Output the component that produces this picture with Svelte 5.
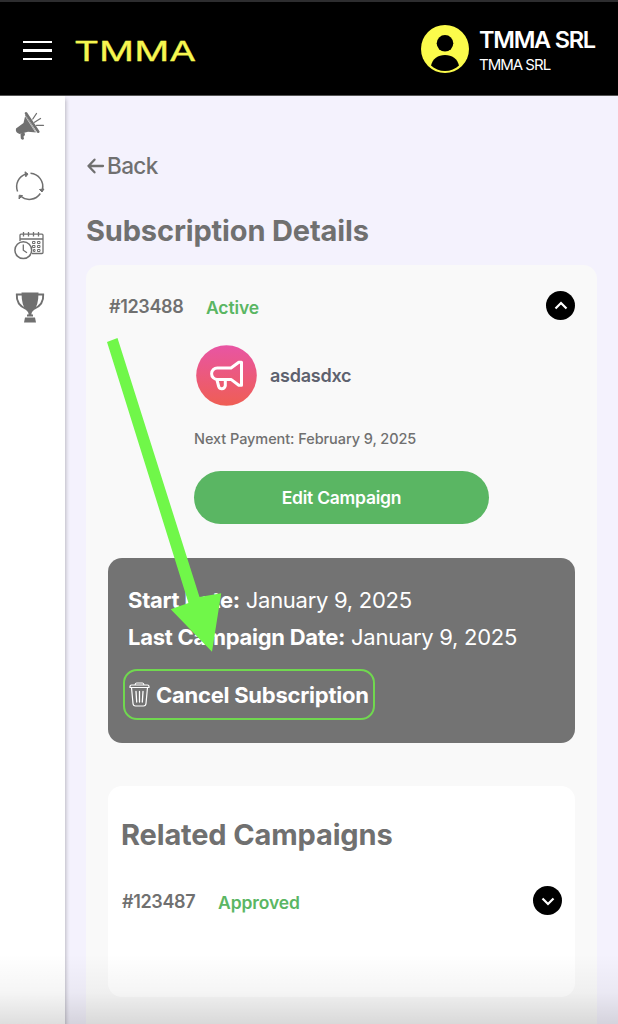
<script>
  let open = true;
  let relatedOpen = false;

  const company = 'TMMA SRL';
  const subscription = {
    id: '123488',
    status: 'Active',
    name: 'asdasdxc',
    nextPayment: 'February 9, 2025',
    startDate: 'January 9, 2025',
    lastDate: 'January 9, 2025'
  };
  const related = [{ id: '123487', status: 'Approved' }];
</script>

<div class="app">
  <header class="topbar">
    <button class="menu-btn" aria-label="Menu">
      <span></span>
      <span></span>
      <span></span>
    </button>
    <svg class="logo" width="122" height="34" viewBox="0 0 122 34">
      <text x="-1" y="26.500" textLength="122" lengthAdjust="spacingAndGlyphs">TMMA</text>
    </svg>
    <div class="account">
      <svg width="48" height="48" viewBox="0 0 48 48">
        <circle cx="24" cy="24" r="24" fill="#fbfb4b" />
        <circle cx="24" cy="18.3" r="8.3" fill="#000" />
        <path d="M10 40.5C11.500 34 17 30 24 30S36.500 34 38 40.500C34.500 44 29.500 46 24 46S13.500 44 10 40.500Z" fill="#000" />
      </svg>
      <div class="account-text">
        <strong>{company}</strong>
        <span>{company}</span>
      </div>
    </div>
  </header>

  <div class="body">
    <nav class="sidebar">
      <a href="#campaigns" aria-label="Campaigns">
        <svg width="32" height="30" viewBox="0 0 32 30">
          <path d="M2 17.500L9.500 12 11.500 3.500 22.500 21.500 14 20.700 5.500 23Q1 21.500 2 17.500Z" fill="#707070" />
          <path d="M6.500 22.500L10.500 21.500 11 24 9.500 25.500 10 28Q8 29.500 6.800 27.500Z" fill="#707070" />
          <path d="M12 2.300L24.300 20.700" stroke="#707070" stroke-width="2.600" stroke-linecap="round" />
          <path d="M11.200 5L22 21.800" stroke="#fff" stroke-width=".6" />
          <path d="M18.800 8L22.500 2.500M20.500 11.200L26.500 7.500M22.500 14.300H29.500" stroke="#707070" stroke-width="1.300" stroke-linecap="round" />
        </svg>
      </a>
      <a href="#subscriptions" aria-label="Subscriptions">
        <svg width="32" height="30" viewBox="0 0 32 30" fill="none" stroke="#707070" stroke-width="1.500">
          <path d="M3.600 20.500A13.200 13.200 0 0 1 12 3M16.500 2.300A13.200 13.200 0 0 1 28.400 18.500M26.300 22.500A13.200 13.200 0 0 1 6.500 25" />
          <path d="M11 .8L14 3 11.800 5.800ZM25.500 18.500L28 21 30 18ZM5 28L5.200 24.200 8.500 24.600Z" fill="#707070" stroke-width="1" />
        </svg>
      </a>
      <a href="#calendar" aria-label="Calendar">
        <svg width="32" height="30" viewBox="0 0 32 30" fill="none" stroke="#707070" stroke-width="1.300">
          <path d="M6 10V4.200Q6 3.200 7 3.200H28Q29 3.200 29 4.200V21.500Q29 22.500 28 22.500H18M6 8H29" />
          <path d="M9.500 1V5.500M14.500 1V5.500M19.500 1V5.500M24.500 1V5.500" />
          <path d="M18.500 10.500h2.500v2h-2.500zM23.500 10.500h2.500v2h-2.500zM18.500 14.500h2.500v2h-2.500zM23.500 14.500h2.500v2h-2.500zM19.500 18.500h1.500v2h-1.500zM23.500 18.500h2.500v2h-2.500z" stroke-width="1" />
          <circle cx="9.300" cy="19.200" r="8.400" fill="#fff" stroke-width="1.500" />
          <path d="M9.300 13.500V19.200L13 21.800" />
        </svg>
      </a>
      <a href="#awards" aria-label="Awards">
        <svg width="32" height="34" viewBox="0 0 32 34">
          <path d="M7.500 1.500H24.500Q24.500 15 19.500 19.500 17.500 21 17.500 22.500V24.500H14.500V22.500Q14.500 21 12.500 19.500 7.500 15 7.500 1.500Z" fill="#707070" />
          <path d="M8 3.500H2.800Q2 13.500 12 18M24 3.500H29.200Q30 13.500 20 18" fill="none" stroke="#707070" stroke-width="1.900" />
          <path d="M13 23.500H19V25.500H13ZM11 26.500H21L22 31.500H10Z" fill="#707070" />
        </svg>
      </a>
    </nav>

    <main class="content">
      <button class="back">
        <svg width="19" height="18" viewBox="0 0 19 18" fill="none" stroke="#707070" stroke-width="2.300" stroke-linecap="round" stroke-linejoin="round">
          <path d="M17 9H2.500M8.500 2.700L2.500 9 8.500 15.300" />
        </svg>
        <span>Back</span>
      </button>
      <h1>Subscription Details</h1>

      <section class="panel">
        <div class="row">
          <span class="number">#{subscription.id}</span>
          <span class="status">{subscription.status}</span>
          <button class="toggle" aria-label="Toggle details" on:click={() => (open = !open)}>
            <svg class:down={!open} width="14" height="14" viewBox="0 0 14 14">
              <path d="M1.500 9.500L7 4 12.500 9.500" />
            </svg>
          </button>
        </div>

        {#if open}
          <div class="campaign">
            <div class="campaign-name">
              <svg width="61" height="61" viewBox="0 0 61 61" fill="none">
                <defs>
                  <linearGradient id="badge" x1="0" y1="0" x2="0" y2="1">
                    <stop offset="0" stop-color="#e855a4" />
                    <stop offset="1" stop-color="#ef5e54" />
                  </linearGradient>
                </defs>
                <circle cx="30.500" cy="30.500" r="30.300" fill="url(#badge)" />
                <g stroke="#fff" stroke-width="3" stroke-linejoin="round" stroke-linecap="round">
                  <path d="M35 23H21.300A5.700 5.700 0 0 0 21.300 34.400H35L42.800 40.300H45.500V17.200H42.800Z" />
                  <path d="M21 35L22.700 41.500Q23.600 44 26 43.800T29.300 40.800V35" />
                </g>
              </svg>
              <strong>{subscription.name}</strong>
            </div>
            <p class="payment">Next Payment: {subscription.nextPayment}</p>
            <button class="edit-btn">Edit Campaign</button>
          </div>

          <div class="dates">
            <p><strong>Start Date:</strong> {subscription.startDate}</p>
            <p><strong>Last Campaign Date:</strong> {subscription.lastDate}</p>
            <button class="cancel-btn">
              <svg width="21" height="25" viewBox="0 0 21 25" fill="none" stroke="#fff" stroke-width="1.200" stroke-linejoin="round" stroke-linecap="round">
                <path d="M1 4.500Q1 3 2.500 3H18.500Q20 3 20 4.500V5.500H1ZM6 3Q6.200 1 7.500 1H13.500Q14.800 1 15 3M2.500 5.500L4 21.500Q4.200 24 6.500 24H14.500Q16.800 24 17 21.500L18.500 5.500" />
                <path d="M7 9.500L7.700 20M10.500 9.500V20M14 9.500L13.300 20" stroke-width="1.300" />
              </svg>
              <span>Cancel Subscription</span>
            </button>
          </div>
        {/if}

        <div class="related">
          <h2>Related Campaigns</h2>
          {#each related as item}
            <div class="row">
              <span class="number">#{item.id}</span>
              <span class="status">{item.status}</span>
              <button class="toggle" aria-label="Toggle campaign" on:click={() => (relatedOpen = !relatedOpen)}>
                <svg class:down={!relatedOpen} width="14" height="14" viewBox="0 0 14 14">
                  <path d="M1.500 9.500L7 4 12.500 9.500" />
                </svg>
              </button>
            </div>
          {/each}
        </div>
      </section>
    </main>
  </div>

  <!-- pointer to the cancel button -->
  <svg class="pointer" width="118" height="316" viewBox="0 0 118 316">
    <path d="M0 4L10.500 0 92.500 259 114.200 255.300 105 313.700 63.700 271.300 81.500 265Z" fill="#70f749" />
  </svg>
  <div class="fade"></div>
</div>

<style>
:global(body) {
  background: #f4f2fd;
}
.app {
  position: relative;
  height: 1024px;
  overflow: hidden;
  display: flex;
  flex-direction: column;
  font-family: Inter, "Liberation Sans", sans-serif;
  color: #707070;
}
button {
  padding: 0;
  border: 0;
  background: none;
  font: inherit;
  color: inherit;
}
p, h1, h2 {
  margin: 0;
}
svg {
  display: block;
  flex: none;
}

.topbar {
  flex: none;
  height: 96px;
  box-sizing: border-box;
  padding: 4px 0 0 23px;
  display: flex;
  align-items: center;
  background: #000;
  border-top: 2px solid #2d2d2f;
  border-bottom: 1px solid #555;
}
.menu-btn {
  flex: none;
  width: 29px;
  display: flex;
  flex-direction: column;
  gap: 6px;
}
.menu-btn span {
  height: 2.3px;
  background: #fff;
}
.logo {
  margin-left: 23px;
}
.logo text {
  font-size: 27px;
  font-weight: 400;
  fill: #f6f650;
  stroke: #f6f650;
  stroke-width: 0.3px;
}
.account {
  margin: -2px 0 0 224px;
  display: flex;
  gap: 10px;
  color: #fff;
}
.account-text {
  display: flex;
  flex-direction: column;
  white-space: nowrap;
}
.account-text strong {
  font-size: 23.5px;
  line-height: 29px;
  font-weight: 600;
  letter-spacing: -1.25px;
}
.account-text span {
  margin-top: 1px;
  font-size: 15px;
  line-height: 20px;
  letter-spacing: -1px;
}

.body {
  flex: 1;
  display: flex;
}
.sidebar {
  z-index: 1;
  flex: none;
  width: 65px;
  box-sizing: border-box;
  padding: 15px 0 0 14px;
  display: flex;
  flex-direction: column;
  gap: 30px;
  background: #fff;
  box-shadow: 1px 3px 4px rgba(0, 0, 0, 0.24);
}
.content {
  flex: 1;
  padding: 54px 21px 0 21px;
  display: flex;
  flex-direction: column;
  align-items: flex-start;
  background: #f4f2fd;
}
.back {
  display: flex;
  align-items: center;
  gap: 2px;
  font-size: 22.5px;
  line-height: 32px;
  font-weight: 500;
  letter-spacing: -0.6px;
}
h1, h2 {
  font-size: 29px;
  line-height: 36px;
  font-weight: 700;
  letter-spacing: -0.15px;
  white-space: nowrap;
}
h1 {
  margin-top: 31px;
}

.panel {
  width: 511px;
  height: 780px;
  margin-top: 16px;
  box-sizing: border-box;
  padding: 26px 22px 0;
  background: #f9f9f9;
  border-radius: 14px;
}
.row {
  display: flex;
  align-items: center;
}
.number {
  width: 97px;
  padding: 2px 0 0 1px;
  font-size: 18px;
  font-weight: 600;
  letter-spacing: -0.35px;
}
.status {
  padding-top: 4px;
  font-size: 17.5px;
  font-weight: 600;
  letter-spacing: -0.1px;
  color: #5ab663;
}
.toggle {
  width: 29px;
  height: 29px;
  margin-left: auto;
  display: flex;
  align-items: center;
  justify-content: center;
  border-radius: 50%;
  background: #000;
}
.toggle path {
  fill: none;
  stroke: #fff;
  stroke-width: 2.2;
}
.down {
  transform: rotate(180deg);
}

.campaign {
  width: 295px;
  margin: 25px 0 0 86px;
}
.campaign-name {
  padding-left: 2px;
  display: flex;
  align-items: center;
  gap: 13px;
}
.campaign-name strong {
  font-size: 18px;
  font-weight: 600;
  letter-spacing: -0.25px;
  color: #5d616e;
}
.payment {
  margin-top: 23px;
  font-size: 14.5px;
  line-height: 20px;
  font-weight: 500;
  letter-spacing: -0.07px;
}
.edit-btn {
  width: 295px;
  height: 53px;
  margin-top: 22px;
  border-radius: 27px;
  background: #5ab663;
  color: #fff;
  font-size: 17.5px;
  font-weight: 600;
  letter-spacing: -0.25px;
}

.dates {
  height: 185px;
  margin-top: 34px;
  box-sizing: border-box;
  padding: 24px 15px 0;
  border-radius: 14px;
  background: #737373;
  color: #fff;
}
.dates p {
  padding-left: 5px;
  font-size: 22px;
  line-height: 37px;
  letter-spacing: -0.28px;
  white-space: nowrap;
}
.cancel-btn {
  width: 252px;
  height: 51px;
  margin-top: 13px;
  box-sizing: border-box;
  padding-left: 4px;
  display: flex;
  align-items: center;
  gap: 6px;
  border: 2px solid #70d84f;
  border-radius: 14px;
  font-size: 22px;
  font-weight: 700;
  letter-spacing: -0.25px;
  white-space: nowrap;
}

.related {
  height: 211px;
  margin-top: 43px;
  box-sizing: border-box;
  padding: 31px 13px 0;
  border-radius: 14px;
  background: #fff;
}
.related .row {
  margin-top: 33px;
}
.related .number {
  width: 96px;
}

.pointer {
  z-index: 2;
  position: absolute;
  top: 338px;
  left: 107px;
}
.fade {
  z-index: 3;
  position: absolute;
  left: 0;
  right: 0;
  bottom: 0;
  height: 70px;
  background: linear-gradient(rgba(0, 0, 0, 0), rgba(0, 0, 0, 0.04) 55%, rgba(0, 0, 0, 0.13));
}
</style>
